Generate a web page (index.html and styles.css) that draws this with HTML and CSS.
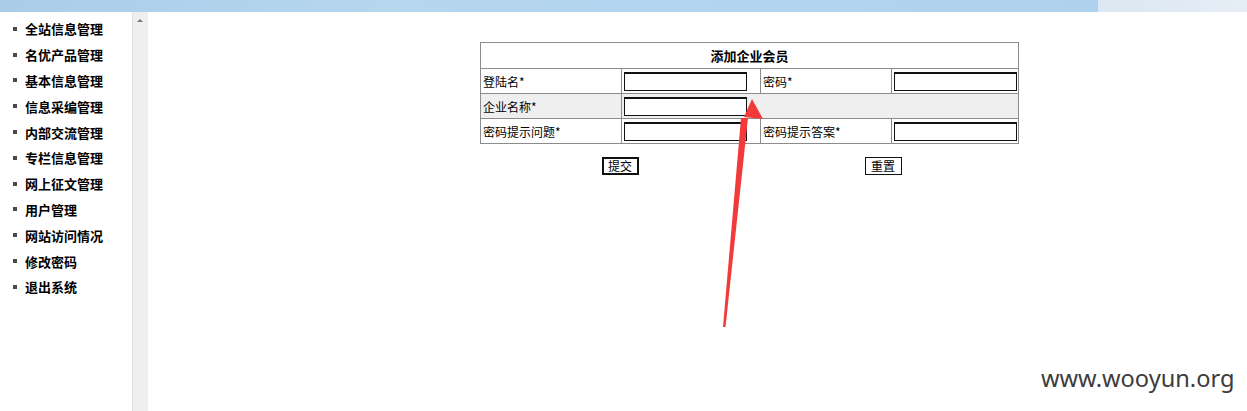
FILE: index.html
```html
<!DOCTYPE html>
<html lang="zh-CN">
<head>
<meta charset="utf-8">
<title>添加企业会员</title>
<link rel="stylesheet" href="styles.css">
</head>
<body>
<div class="topbar"><div class="topbar-main"></div><div class="topbar-side"></div></div>
<div class="frame">
  <ul class="menu">
    <li>全站信息管理</li>
    <li>名优产品管理</li>
    <li>基本信息管理</li>
    <li>信息采编管理</li>
    <li>内部交流管理</li>
    <li>专栏信息管理</li>
    <li>网上征文管理</li>
    <li>用户管理</li>
    <li>网站访问情况</li>
    <li>修改密码</li>
    <li>退出系统</li>
  </ul>
  <div class="scrollbar"><span class="arrow"></span></div>
  <div class="main">
    <table class="form">
      <colgroup><col class="c1"><col class="c2"><col class="c3"><col class="c4"></colgroup>
      <tr class="head"><th colspan="4">添加企业会员</th></tr>
      <tr><td>登陆名*</td><td><input class="field" type="text"></td><td>密码*</td><td><input class="field" type="password"></td></tr>
      <tr class="alt"><td>企业名称*</td><td colspan="3"><input class="field" type="text"></td></tr>
      <tr><td>密码提示问题*</td><td><input class="field" type="text"></td><td>密码提示答案*</td><td><input class="field" type="text"></td></tr>
    </table>
    <div class="actions">
      <button class="btn btn-primary" type="button">提交</button>
      <button class="btn" type="button">重置</button>
    </div>
  </div>
</div>
<svg class="red-arrow" width="1247" height="411" viewBox="0 0 1247 411">
  <polygon points="723,327 725.5,327 748,118 741,118" fill="#f23a3a"/>
  <polygon points="752,99 763,119 744,117" fill="#f23a3a"/>
</svg>
<div class="watermark">www.wooyun.org</div>
</body>
</html>
```
FILE: styles.css
```css
html, body {
  margin: 0;
  padding: 0;
  background: #fff;
  width: 1247px;
  height: 411px;
  overflow: hidden;
  font-family: "Noto Sans CJK SC", "Liberation Sans", sans-serif;
  color: #000;
}
.topbar {
  display: flex;
  height: 12px;
}
.topbar-main {
  width: 1098px;
  background: linear-gradient(90deg, #a9cde9 0%, #b6d6ee 35%, #b2d4ef 70%, #aed1ee 100%);
}
.topbar-side {
  flex: 1;
  background: linear-gradient(90deg, #dbe7f2, #e6edf5);
}
.frame {
  display: flex;
  height: 399px;
}
.menu {
  list-style: none;
  margin: 0;
  padding: 4px 0 0 0;
  width: 132px;
  flex: none;
}
.menu li {
  display: flex;
  align-items: center;
  height: 25.8px;
  padding-left: 13px;
  font-size: 13px;
  font-weight: bold;
  color: #000;
}
.menu li::before {
  content: "";
  width: 4px;
  height: 4px;
  background: #4a4a4a;
  margin-right: 8px;
  flex: none;
}
.scrollbar {
  width: 15px;
  flex: none;
  background: #efefef;
  border-left: 1px solid #e2e2e2;
  position: relative;
}
.scrollbar .arrow {
  position: absolute;
  left: 4px;
  top: 7px;
  width: 0;
  height: 0;
  border-left: 3px solid transparent;
  border-right: 3px solid transparent;
  border-bottom: 3px solid #777;
}
.main {
  flex: 1;
  padding: 30px 0 0 332px;
}
.form {
  border-collapse: collapse;
  table-layout: fixed;
  width: 538px;
  font-size: 12px;
}
.form col.c1 { width: 141px; }
.form col.c2 { width: 139px; }
.form col.c3 { width: 131px; }
.form col.c4 { width: 127px; }
.form th, .form td {
  border: 1px solid #8c8c8c;
  padding: 0 2px;
  height: 24px;
  text-align: left;
  white-space: nowrap;
}
.form tr.head th {
  height: 25px;
  text-align: center;
  font-size: 13px;
  font-weight: bold;
}
.form tr.alt td {
  background: #efefef;
}
.field {
  display: block;
  box-sizing: border-box;
  width: 123px;
  height: 19px;
  margin: 0;
  padding: 0;
  border: 1px solid #111;
  border-top-width: 2px;
  background: #fff;
  font-size: 12px;
}
.actions {
  display: grid;
  grid-template-columns: 280px 246px;
  margin-top: 13px;
}
.btn {
  justify-self: center;
  box-sizing: border-box;
  width: 37px;
  height: 18px;
  padding: 0;
  border: 1px solid #111;
  background: #fff;
  font-family: "Noto Sans CJK SC", sans-serif;
  font-size: 12px;
  line-height: 14px;
  color: #000;
}
.btn-primary {
  border-width: 2px;
}
.red-arrow {
  position: absolute;
  left: 0;
  top: 0;
  pointer-events: none;
}
.watermark {
  position: absolute;
  left: 1041px;
  top: 362px;
  font-family: "Noto Sans", "Open Sans", sans-serif;
  font-size: 23.6px;
  color: #3c3c3c;
}
```
